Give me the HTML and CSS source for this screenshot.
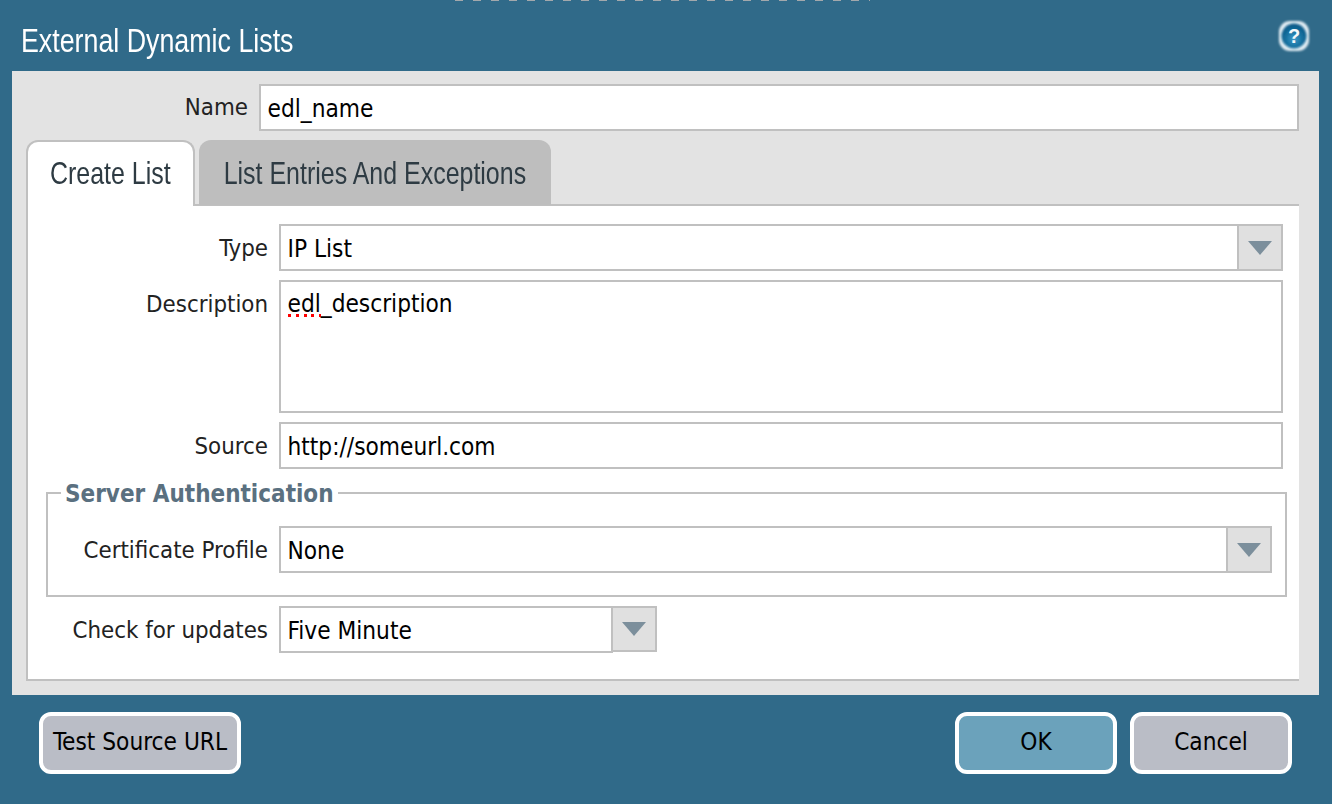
FILE: index.html
```html
<!DOCTYPE html>
<html lang="en">
  <head>
    <meta charset="UTF-8" />
    <meta name="viewport" content="width=device-width, initial-scale=1.0" />
    <title>External Dynamic Lists</title>
    <link rel="stylesheet" href="styles.css">
  </head>
  <body>
    <div class="backdrop"></div>
    <div class="dialog">
      <div class="title-bar">
        <span class="title-text">External Dynamic Lists</span>
        <svg class="help-icon" width="34" height="34" viewBox="0 0 34 34">
          <defs>
            <radialGradient id="helpFill" cx="50%" cy="62%" r="60%">
              <stop offset="0%" stop-color="#3f9ccb" />
              <stop offset="55%" stop-color="#14709f" />
              <stop offset="100%" stop-color="#0b5785" />
            </radialGradient>
            <filter id="helpSoft"><feGaussianBlur stdDeviation="1" /></filter>
          </defs>
          <rect x="2" y="2" width="30" height="30" rx="11" fill="#e4eef4" filter="url(#helpSoft)" />
          <circle cx="17" cy="17" r="12.5" fill="url(#helpFill)" filter="url(#helpSoft)" />
          <text x="17" y="24" text-anchor="middle" class="help-mark">?</text>
        </svg>
      </div>

      <div class="panel">
        <div class="name-row">
          <label class="name-label">Name</label>
          <input class="field name-field" type="text" value="edl_name" />
        </div>

        <div class="tabs">
          <div class="tab tab-active"><span class="tab-text">Create List</span></div>
          <div class="tab"><span class="tab-text">List Entries And Exceptions</span></div>
        </div>

        <div class="tab-body">
          <div class="row">
            <label class="row-label">Type</label>
            <div class="select">
              <div class="field select-value">IP List</div>
              <div class="select-btn">
                <svg width="24" height="14" viewBox="0 0 24 14"><polygon points="0,0 24,0 12,14" fill="#7c8f9c" /></svg>
              </div>
            </div>
          </div>

          <div class="row">
            <label class="row-label">Description</label>
            <div class="field text-area"><span class="misspelled">edl</span>_description</div>
          </div>

          <div class="row">
            <label class="row-label">Source</label>
            <input class="field" type="text" value="http://someurl.com" />
          </div>

          <fieldset class="auth-group">
            <legend class="auth-legend">Server Authentication</legend>
            <div class="row row-tight">
              <label class="row-label auth-label">Certificate Profile</label>
              <div class="select">
                <div class="field select-value">None</div>
                <div class="select-btn">
                  <svg width="24" height="14" viewBox="0 0 24 14"><polygon points="0,0 24,0 12,14" fill="#7c8f9c" /></svg>
                </div>
              </div>
            </div>
          </fieldset>

          <div class="row">
            <label class="row-label">Check for updates</label>
            <div class="select select-short">
              <div class="field select-value">Five Minute</div>
              <div class="select-btn">
                <svg width="24" height="14" viewBox="0 0 24 14"><polygon points="0,0 24,0 12,14" fill="#7c8f9c" /></svg>
              </div>
            </div>
          </div>
        </div>
      </div>

      <div class="footer">
        <button class="btn btn-wide" type="button">Test Source URL</button>
        <div class="footer-right">
          <button class="btn btn-primary" type="button">OK</button>
          <button class="btn" type="button">Cancel</button>
        </div>
      </div>
    </div>
  </body>
</html>
```

FILE: styles.css
```css
* {
  box-sizing: border-box;
}

html,
body {
  margin: 0;
  height: 100%;
  overflow: hidden;
  background: #306a89;
}

body {
  font-family: "DejaVu Sans Condensed", "DejaVu Sans", sans-serif;
  font-size: 24px;
  color: #222;
}

/* the page behind the dialog just shows through on the first pixel row */
.backdrop {
  height: 1px;
  width: 425px;
  margin-left: 445px;
  background: repeating-linear-gradient(90deg, #306a89 0, #306a89 10px, #a3a8ac 10px, #a3a8ac 18px);
}

.dialog {
  height: 803px;
  background: #306a89;
}

.title-bar {
  height: 70px;
  display: flex;
  align-items: center;
  justify-content: space-between;
  padding: 0 21px;
}

/* no narrow font installed, squeeze the sans instead */
.title-text {
  padding-top: 8px;
  font-family: "Liberation Sans", sans-serif;
  font-size: 34px;
  color: #fff;
  white-space: nowrap;
  transform: scaleX(0.788);
  transform-origin: left center;
}

.help-mark {
  font-family: "Liberation Sans", sans-serif;
  font-size: 20px;
  font-weight: bold;
  fill: #f2f7fa;
}

.panel {
  height: 624px;
  margin: 0 13px 0 12px;
  padding: 13px 20px 14px 14px;
  background: #e3e3e3;
}

.name-row {
  display: flex;
  align-items: flex-start;
  gap: 11px;
  height: 47px;
}

.name-label {
  width: 222px;
  text-align: right;
  font-size: 23.8px;
  line-height: 47px;
}

.field {
  height: 47px;
  flex: 1;
  min-width: 0;
  padding: 2px 6.5px 0;
  border: 2px solid #c0c0c0;
  background: #fff;
  color: #000;
  font: inherit;
  font-size: 24.2px;
  display: flex;
  align-items: center;
  outline: none;
}

.tabs {
  display: flex;
  gap: 4px;
  height: 66px;
  margin-top: 9px;
  margin-bottom: -2px;
  position: relative;
}

.tab {
  width: 352px;
  height: 65px;
  padding-top: 1px;
  display: flex;
  align-items: center;
  justify-content: center;
  border-radius: 12px 12px 0 0;
  background: #bebebe;
  color: #2e3b43;
  font-family: "Liberation Sans", sans-serif;
  font-size: 32px;
}

.tab-text {
  white-space: nowrap;
  transform: scaleX(0.78);
}

.tab-active {
  width: 169px;
  height: 66px;
  padding: 0 0 2px;
  background: #fff;
  border: 2px solid #c0c0c0;
  border-bottom: none;
}

.tab-body {
  height: 477px;
  padding: 18px 12px 0 0;
  background: #fff;
  border-left: 2px solid #c0c0c0;
  border-top: 2px solid #c0c0c0;
  border-bottom: 2px solid #c0c0c0;
}

.row {
  display: flex;
  align-items: flex-start;
  gap: 11px;
  margin: 0 4px 9px 0;
}

.row-label {
  width: 240px;
  height: 47px;
  flex: none;
  text-align: right;
  font-size: 23.8px;
  line-height: 49px;
}

.select {
  display: flex;
  flex: 1;
}

.select-short {
  flex: none;
  width: 378px;
}

.select-btn {
  width: 46px;
  height: 47px;
  flex: none;
  display: flex;
  align-items: center;
  justify-content: center;
  margin-left: -2px;
  background: #e0e0e0;
  border: 2px solid #c0c0c0;
}

.select-short .select-btn {
  height: 46px;
}

.text-area {
  height: 133px;
  display: block;
  padding-top: 8px;
}

.misspelled {
  background: repeating-linear-gradient(90deg, #f00 0, #f00 3px, transparent 3px, transparent 7.8px) left 0 bottom 1px / 100% 3px no-repeat;
}

.auth-group {
  margin: 0 0 9px 18px;
  padding: 18px 13px 22px 0;
  border: 2px solid #c0c0c0;
  min-width: 0;
}

.auth-legend {
  margin-left: 13px;
  padding: 0 4px;
  height: 30px;
  line-height: 32px;
  font-weight: bold;
  color: #5a7080;
}

.row-tight {
  margin: 0;
}

.auth-label {
  width: 220px;
}

.footer {
  display: flex;
  justify-content: space-between;
  padding: 17px 40px 0 39px;
}

.footer-right {
  display: flex;
  gap: 13px;
}

.btn {
  width: 162px;
  height: 62px;
  padding: 0 0 2px;
  border: 4px solid #fff;
  border-radius: 12px;
  background: #babdc6;
  color: #000;
  font: inherit;
  font-size: 24.2px;
}

.btn-wide {
  width: 202px;
}

.btn-primary {
  background: #6ba2bb;
}
```
